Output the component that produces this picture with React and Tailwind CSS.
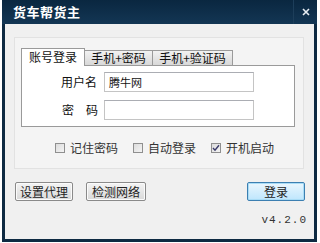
import React from 'react'

const cjk = { fontFamily: '"Noto Sans CJK SC", "Noto Sans", sans-serif' }

const Check = ({ checked, label }) => (
  <label className="flex items-center gap-[5px]">
    <span className="w-[10px] h-[10px] border border-[#8f8f8f] bg-gradient-to-br from-[#dcdcdc] to-[#f4f4f4] flex items-center justify-center">
      {checked && (
        <svg width="8" height="8" viewBox="0 0 8 8">
          <path d="M1 4 L3 6.2 L7 1.2" stroke="#3a3a6a" strokeWidth="1.4" fill="none" />
        </svg>
      )}
    </span>
    <span className="text-[12px] text-[#333]">{label}</span>
  </label>
)

const Btn = ({ children, primary, w }) => (
  <button
    type="button"
    className={
      primary
        ? 'h-[19px] rounded-[2px] border border-[#3c7fb1] bg-gradient-to-b from-[#eaf6fd] to-[#bee6fd] text-[12px] text-[#222] leading-none shadow-[inset_0_0_0_1px_#a9dcf6]'
        : 'h-[19px] rounded-[2px] border border-[#8a8a8a] bg-gradient-to-b from-[#f4f4f4] to-[#d9d9d9] text-[12px] text-[#222] leading-none shadow-[inset_0_0_0_1px_#fbfbfb]'
    }
    style={{ width: w }}
  >
    {children}
  </button>
)

const App = () => {
  return (
    <div className="w-[320px] h-[243px] bg-white" style={cjk}>
      <div className="ml-[2px] w-[315px] h-[242px] bg-[#0e2a42] flex flex-col px-[3px] pb-[3px]">
        {/* title bar */}
        <div className="h-[24px] flex items-center justify-between -mx-[3px] bg-gradient-to-b from-[#0a2740] to-[#133654]">
          <span className="pl-[11px] text-[13px] font-bold text-white tracking-[0.5px]">货车帮货主</span>
          <span className="w-[24px] h-[24px] flex items-center justify-center border-l border-[#1d3e5a]">
            <svg width="8" height="8" viewBox="0 0 8 8">
              <path d="M1 1 L7 7 M7 1 L1 7" stroke="#e8eef4" strokeWidth="1.6" />
            </svg>
          </span>
        </div>

        <div className="flex-1 bg-[#f0f0f0] flex flex-col">
          {/* main group */}
          <div className="ml-[9px] mt-[13px] w-[290px] h-[132px] bg-[#f4f4f4] border border-[#e2e2e2] flex flex-col">
            <div className="pl-[6px] pt-[9px]">
              {/* tabs */}
              <div className="flex items-end h-[18px]">
                <div className="w-[64px] h-[18px] bg-white border border-b-0 border-[#9a9a9a] flex items-center justify-center text-[12px] text-[#111] relative z-10 -mb-px pb-px">账号登录</div>
                <div className="w-[68px] h-[15px] bg-gradient-to-b from-[#f2f2f2] to-[#d8d8d8] border border-b-0 border-l-0 border-[#9a9a9a] flex items-center justify-center text-[12px] text-[#111]">手机+密码</div>
                <div className="w-[80px] h-[15px] bg-gradient-to-b from-[#f2f2f2] to-[#d8d8d8] border border-b-0 border-l-0 border-[#9a9a9a] flex items-center justify-center text-[12px] text-[#111]">手机+验证码</div>
              </div>
              {/* tab panel */}
              <div className="w-[274px] h-[62px] bg-white border border-[#9a9a9a] flex flex-col gap-[8px] pt-[6px]">
                <div className="flex items-center">
                  <span className="w-[82px] text-right pr-[7px] text-[12px] text-[#111]">用户名</span>
                  <div className="w-[150px] h-[20px] border border-[#c4c4c4] border-t-[#abadb3] flex items-center pl-[4px] text-[11px] text-[#111]">腾牛网</div>
                </div>
                <div className="flex items-center">
                  <span className="w-[82px] flex justify-between pl-[40px] pr-[6px] text-[12px] text-[#111]">
                    <span>密</span>
                    <span>码</span>
                  </span>
                  <div className="w-[150px] h-[20px] border border-[#c4c4c4] border-t-[#abadb3]"></div>
                </div>
              </div>
            </div>
            {/* options */}
            <div className="flex-1 flex items-center pl-[40px] gap-[15px]">
              <Check label="记住密码" />
              <Check label="自动登录" />
              <Check checked label="开机启动" />
            </div>
          </div>

          {/* buttons */}
          <div className="flex items-center mt-[13px] ml-[10px] mr-[9px]">
            <Btn w="58px">设置代理</Btn>
            <span className="ml-[13px]"></span>
            <Btn w="60px">检测网络</Btn>
            <span className="flex-1"></span>
            <Btn primary w="58px">登录</Btn>
          </div>

          <div className="mt-[11px] mr-[7px] text-right text-[11px] text-[#333] tracking-[1px]" style={{ fontFamily: '"Liberation Mono", monospace' }}>
            v4.2.0
          </div>
        </div>
      </div>
    </div>
  )
}

export default App
